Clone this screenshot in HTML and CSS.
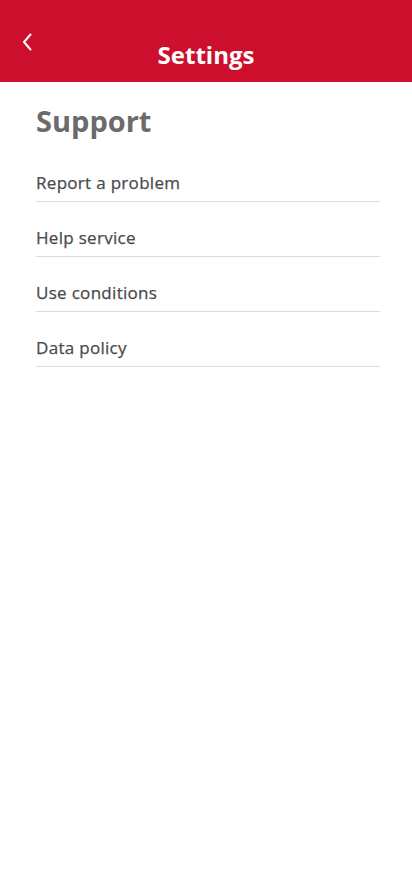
FILE: index.html
```html
<!DOCTYPE html>
<html>
<head>
<meta charset="utf-8">
<link rel="stylesheet" href="styles.css">
</head>
<body>
<header class="topbar">
  <button class="back" aria-label="Back">
    <svg width="12" height="18" viewBox="0 0 12 18"><path d="M9.5 1.5 L3 9 L9.5 16.5" fill="none" stroke="#fff" stroke-width="2" stroke-linecap="round" stroke-linejoin="round"/></svg>
  </button>
  <h1 class="title">Settings</h1>
</header>
<main class="content">
  <h2 class="section">Support</h2>
  <ul class="list">
    <li class="item">Report a problem</li>
    <li class="item">Help service</li>
    <li class="item">Use conditions</li>
    <li class="item">Data policy</li>
  </ul>
</main>
</body>
</html>
```
FILE: styles.css
```css
* { box-sizing: border-box; }
body {
  margin: 0;
  background: #fff;
  font-family: "Open Sans", "Noto Sans", sans-serif;
}
.topbar {
  position: relative;
  height: 82px;
  background: #cd0f2e;
  display: flex;
  align-items: flex-end;
  justify-content: center;
  padding-bottom: 12px;
}
.back {
  position: absolute;
  left: 19px;
  top: 32px;
  width: 16px;
  height: 20px;
  padding: 0;
  border: 0;
  background: none;
  display: flex;
  align-items: center;
  justify-content: center;
}
.title {
  margin: 0;
  color: #fff;
  font-size: 24px;
  font-weight: 700;
  line-height: 30px;
}
.content {
  padding: 0 32px 0 36px;
}
.section {
  margin: 20px 0 0;
  color: #6b6b6b;
  font-size: 29px;
  font-weight: 700;
  line-height: 38px;
}
.list {
  list-style: none;
  margin: 19px 0 0;
  padding: 0;
}
.item {
  color: #4a4a4a;
  font-size: 17px;
  font-weight: 400;
  letter-spacing: 0.3px;
  line-height: 24px;
  padding: 12px 0 6px;
  border-bottom: 1px solid #dcdcdc;
  margin-bottom: 12px;
  -webkit-text-stroke: 0.25px #4a4a4a;
}
```
